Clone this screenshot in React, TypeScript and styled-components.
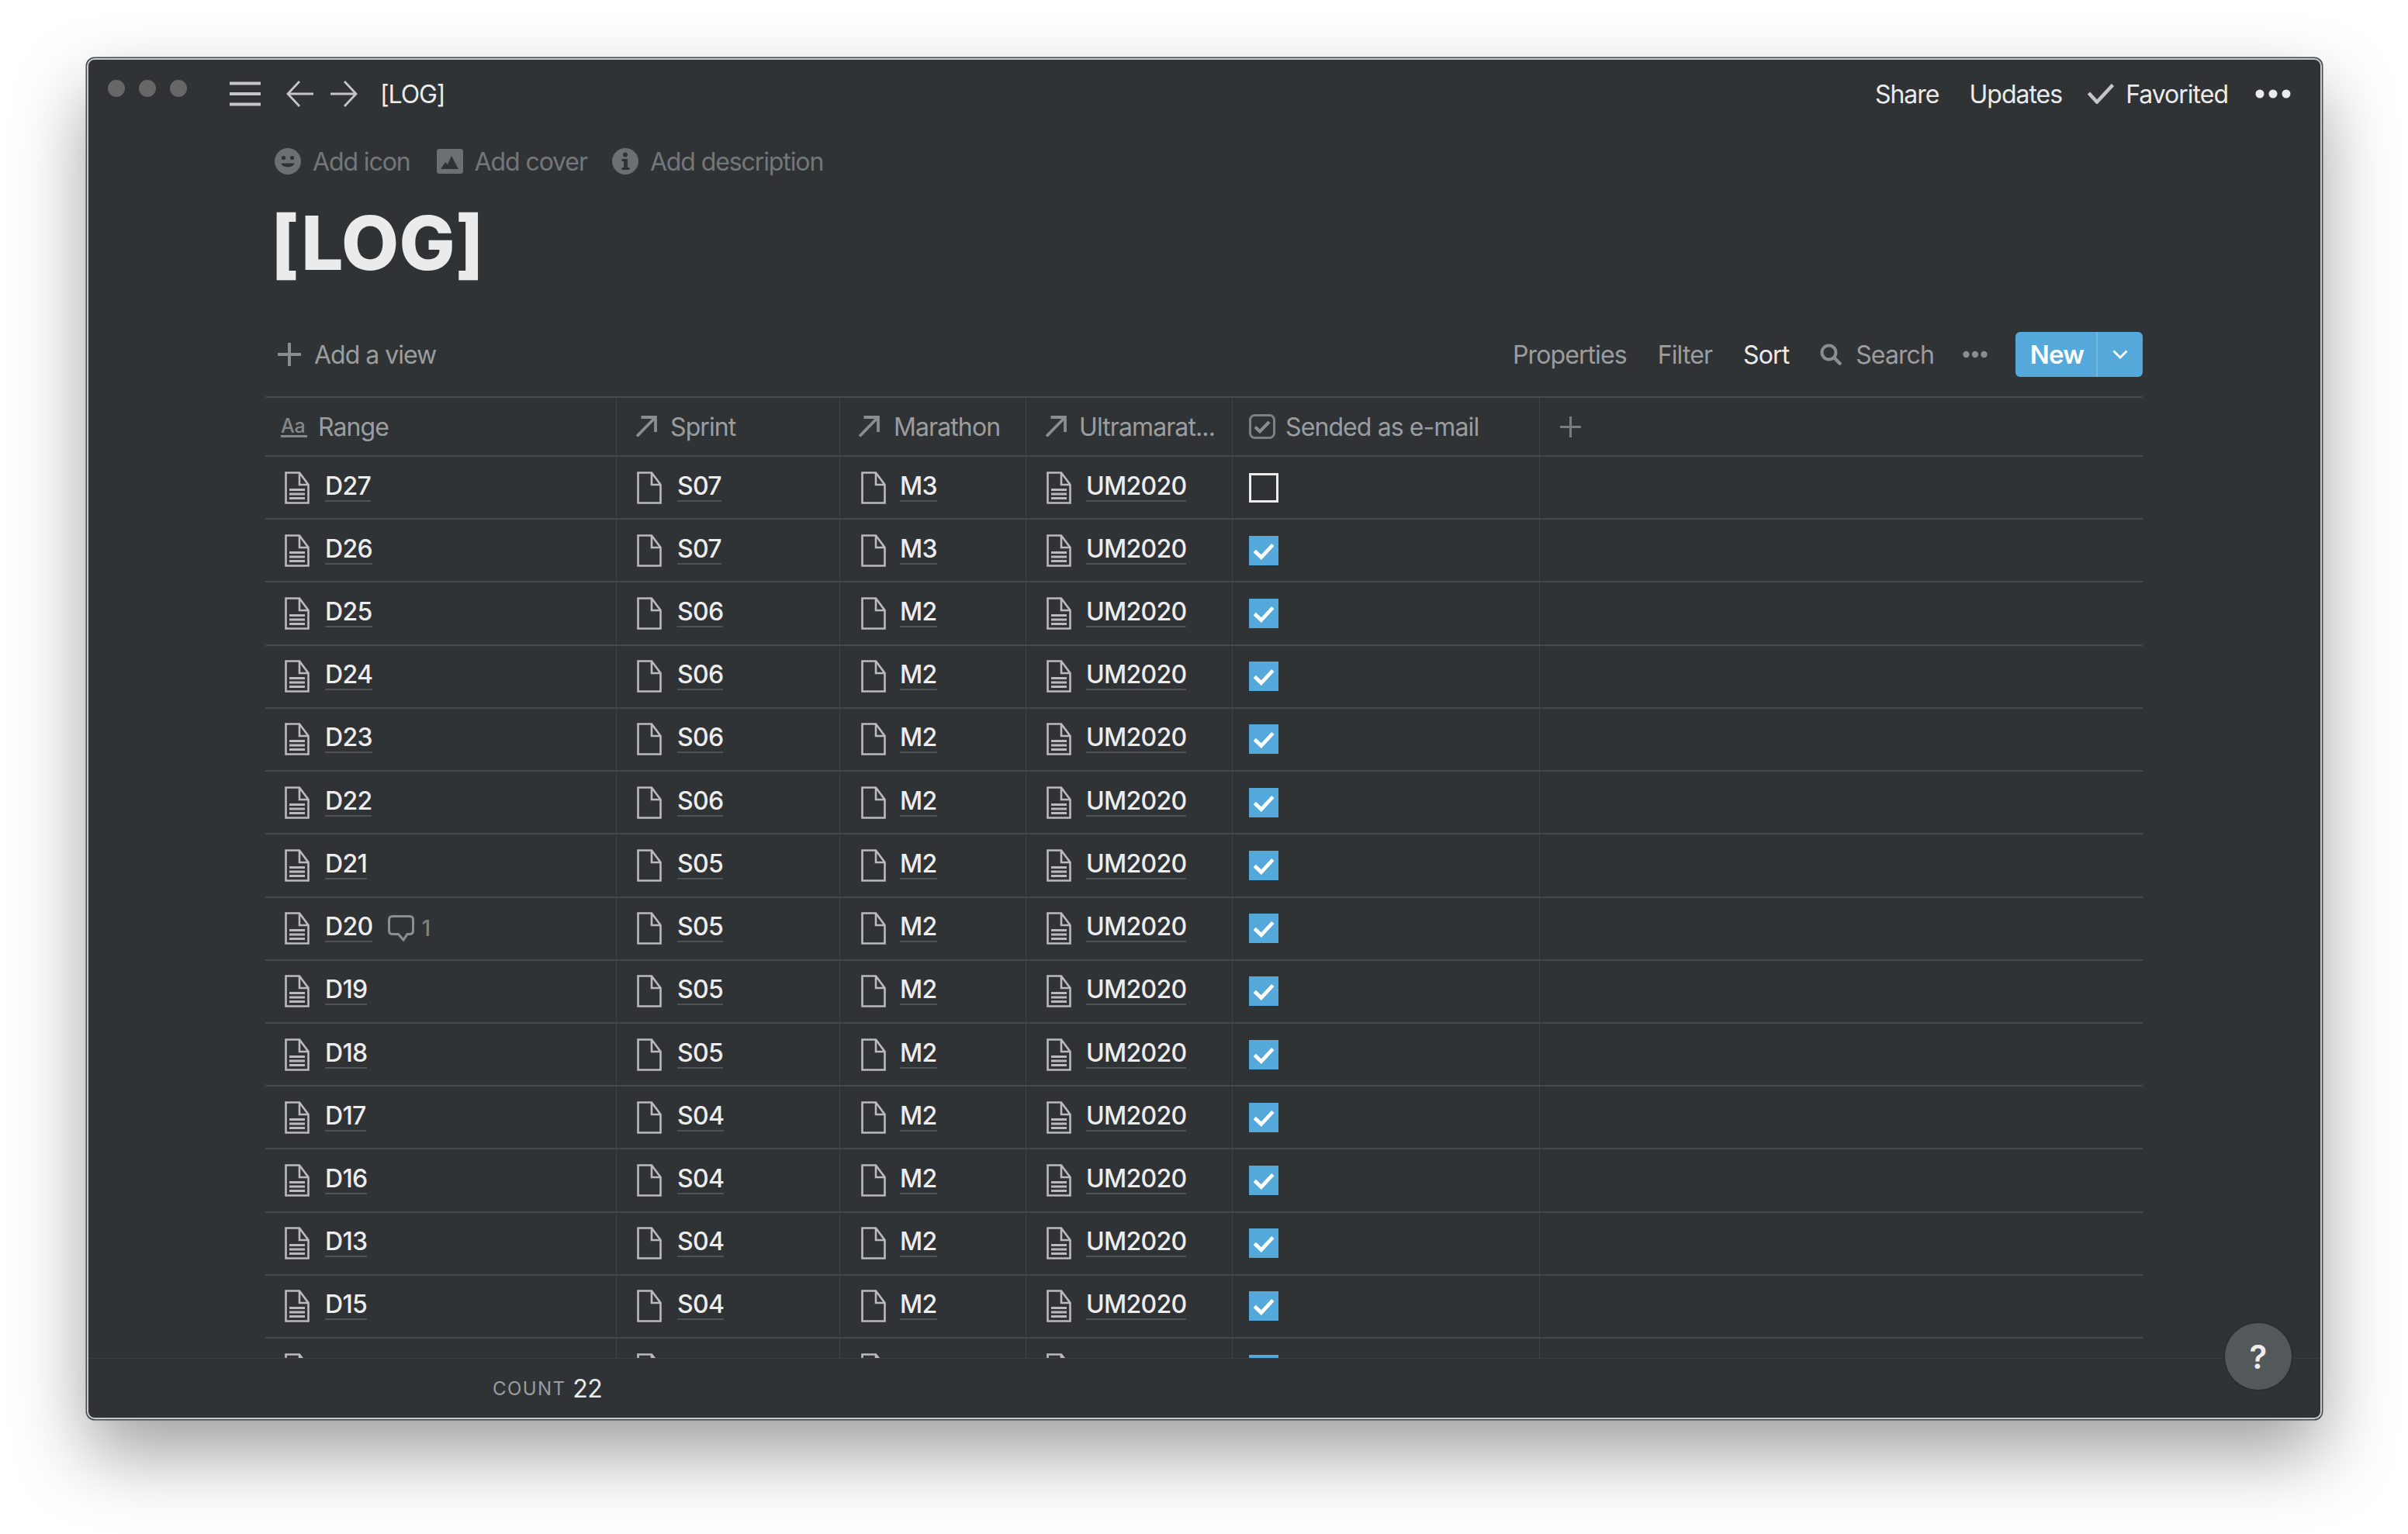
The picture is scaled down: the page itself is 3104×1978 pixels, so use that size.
import React from "react";
import styled, { createGlobalStyle } from "styled-components";

const Global = createGlobalStyle`
  html, body { margin: 0; padding: 0; background: #fff; }
  body { font-family: Inter, "Liberation Sans", sans-serif; width: 3104px; height: 1978px; overflow: hidden; }
  * { box-sizing: border-box; }
`;

const Page = styled.div`
  width: 3104px;
  height: 1978px;
  padding: 75px 0 0 112px;
  background: #fff;
`;

const Window = styled.div`
  position: relative;
  width: 2881px;
  height: 1755px;
  display: flex;
  flex-direction: column;
  background: #303336;
  border: 2px solid #c9caca;
  border-radius: 10px;
  box-shadow: 0 0 0 1.5px #46494b, 0 44px 96px 0 rgba(0, 0, 0, 0.38);
`;

const Topbar = styled.header`
  height: 88px;
  flex: none;
  display: flex;
  align-items: center;
  padding: 0 38px 0 25px;
`;

const Lights = styled.div`
  display: flex;
  gap: 18px;
  margin-bottom: 14px;
  margin-right: 55px;
`;

const Light = styled.span`
  width: 22px;
  height: 22px;
  border-radius: 50%;
  background: #666767;
`;

const NavIcon = styled.svg`
  flex: none;
  display: block;
  color: #c4c5c6;
`;

const NavGroup = styled.div`
  display: flex;
  align-items: center;
  gap: 20px;
`;

const Crumb = styled.span`
  margin-left: 29px;
  font-size: 32px;
  letter-spacing: -1.1px;
  color: #ebebeb;
`;

const TopActions = styled.div`
  margin-left: auto;
  display: flex;
  align-items: center;
`;

const TopLink = styled.span<{ $ml?: number }>`
  margin-left: ${(p) => p.$ml ?? 0}px;
  font-size: 32px;
  letter-spacing: -1px;
  color: #ebebeb;
`;

const Dots = styled.svg<{ $ml: number }>`
  margin-left: ${(p) => p.$ml}px;
  display: block;
  flex: none;
`;

const Content = styled.div`
  flex: 1;
  min-height: 0;
  display: flex;
  flex-direction: column;
  padding: 0 229px 0 228px;
`;

const MetaRow = styled.div`
  height: 62px;
  margin-top: 12px;
  flex: none;
  display: flex;
  align-items: center;
  padding-left: 12px;
`;

const MetaItem = styled.div<{ $ml?: number }>`
  display: flex;
  align-items: center;
  gap: 15px;
  margin-left: ${(p) => p.$ml ?? 0}px;
  font-size: 32px;
  letter-spacing: -1.1px;
  color: #737779;
`;

const Title = styled.h1`
  margin: 30px 0 0;
  height: 88px;
  flex: none;
  padding-left: 7px;
  font-size: 96px;
  line-height: 88px;
  font-weight: 800;
  letter-spacing: 0.2px;
  color: #ebebeb;
`;

const Toolbar = styled.div`
  margin-top: 71px;
  height: 58px;
  flex: none;
  display: flex;
  align-items: center;
  padding-left: 16px;
`;

const AddView = styled.div`
  display: flex;
  align-items: center;
  gap: 17px;
  font-size: 32px;
  letter-spacing: -1px;
  color: #9b9d9f;
`;

const Tools = styled.div`
  margin-left: auto;
  display: flex;
  align-items: center;
`;

const Tool = styled.span<{ $active?: boolean; $ml?: number }>`
  margin-left: ${(p) => p.$ml ?? 0}px;
  font-size: 32px;
  letter-spacing: -0.9px;
  color: ${(p) => (p.$active ? "#ebebeb" : "#9b9d9f")};
`;

const NewButton = styled.div`
  margin-left: 36px;
  width: 164px;
  height: 58px;
  display: flex;
  align-items: stretch;
  background: #55a9da;
  border-radius: 6px;
`;

const NewLabel = styled.span`
  width: 106px;
  padding-left: 3px;
  display: flex;
  align-items: center;
  justify-content: center;
  border-right: 2px solid #74b8e0;
  font-size: 33px;
  font-weight: 600;
  letter-spacing: -0.8px;
  color: #fff;
`;

const NewCaret = styled.span`
  flex: 1;
  display: flex;
  align-items: center;
  justify-content: center;
`;

const Table = styled.div`
  margin-top: 25px;
  flex: 1;
  min-height: 0;
  overflow: hidden;
  border-top: 2px solid #45494c;
`;

const Row = styled.div<{ $head?: boolean }>`
  height: ${(p) => (p.$head ? "76px" : "81.23px")};
  display: grid;
  grid-template-columns: 453px 288px 240px 266px 396px 1fr;
  border-bottom: 2.5px solid #45494c;
`;

const Cell = styled.div<{ $pl: number; $gap: number }>`
  min-width: 0;
  display: flex;
  align-items: center;
  gap: ${(p) => p.$gap}px;
  padding-left: ${(p) => p.$pl}px;
  border-right: 1.5px solid #3e4346;
  &:last-child { border-right: none; }
`;

const HeadLabel = styled.span`
  font-size: 32px;
  letter-spacing: -0.9px;
  color: #9b9d9f;
  white-space: nowrap;
`;

const AaMark = styled.span`
  display: block;
  width: 34px;
  font-size: 25px;
  line-height: 23px;
  font-weight: 500;
  letter-spacing: -0.3px;
  white-space: nowrap;
  color: #85888a;
  border-bottom: 3px solid #85888a;
  margin-top: 2px;
`;

const PageLink = styled.span`
  margin-top: -2px;
  font-size: 32px;
  line-height: 36px;
  font-weight: 500;
  letter-spacing: -0.7px;
  color: #ededed;
  border-bottom: 2px solid #4f5356;
`;

const Comments = styled.span`
  display: flex;
  align-items: center;
  gap: 9px;
  margin-left: 0;
  font-size: 28px;
  font-weight: 500;
  color: #7f8284;
`;

const CheckBox = styled.span<{ $on: boolean }>`
  width: 38px;
  height: 38px;
  display: flex;
  align-items: center;
  justify-content: center;
  background: ${(p) => (p.$on ? "#55a9da" : "transparent")};
  border: ${(p) => (p.$on ? "none" : "3.5px solid #ededed")};
`;

const Footer = styled.div`
  height: 77px;
  flex: none;
  display: flex;
  align-items: center;
  border-top: 1px solid #383d40;
  padding: 0 0 0 521px;
`;

const CountLabel = styled.span`
  font-size: 24px;
  letter-spacing: 1.4px;
  color: #9b9d9f;
`;

const CountValue = styled.span`
  margin-left: 9px;
  font-size: 32px;
  letter-spacing: -0.5px;
  color: #ebebeb;
`;

const Help = styled.div`
  position: absolute;
  right: 37px;
  bottom: 36px;
  width: 86px;
  height: 86px;
  border-radius: 50%;
  display: flex;
  align-items: center;
  justify-content: center;
  background: #53585b;
  box-shadow: 0 0 0 2px #2a2e31;
  font-size: 42px;
  font-weight: 600;
  color: #ededed;
`;

const DocIcon = ({ lines }: { lines?: boolean }) => (
  <svg width="32" height="42" viewBox="0 0 32 42" fill="none" style={{ flex: "none", display: "block" }}>
    <path d="M1.5 1.5H19L30.5 17V40.5H1.5Z M19 1.5V17H30.5" stroke="#b9bbbc" strokeWidth="2.6" />
    {lines && <path d="M6 23.5H26M6 29H26M6 34.5H26" stroke="#b9bbbc" strokeWidth="2.8" />}
  </svg>
);

const RelArrow = () => (
  <svg width="28" height="28" viewBox="0 0 28 28" fill="none" style={{ flex: "none", display: "block" }}>
    <path d="M2 26.5L25 3M7.5 2H26V21" stroke="#8b8e90" strokeWidth="3.8" />
  </svg>
);

const Check = ({ size, color, width }: { size: number; color: string; width: number }) => (
  <svg width={size} height={size} viewBox="0 0 28 28" fill="none" style={{ display: "block" }}>
    <path d="M3 14.5L11 22L25 7" stroke={color} strokeWidth={width} />
  </svg>
);

const rows: [string, string, string, boolean, boolean?][] = [
  ["D27", "S07", "M3", false],
  ["D26", "S07", "M3", true],
  ["D25", "S06", "M2", true],
  ["D24", "S06", "M2", true],
  ["D23", "S06", "M2", true],
  ["D22", "S06", "M2", true],
  ["D21", "S05", "M2", true],
  ["D20", "S05", "M2", true, true],
  ["D19", "S05", "M2", true],
  ["D18", "S05", "M2", true],
  ["D17", "S04", "M2", true],
  ["D16", "S04", "M2", true],
  ["D13", "S04", "M2", true],
  ["D15", "S04", "M2", true],
  ["D14", "S04", "M2", true],
];

export default function App() {
  return (
    <Page>
      <Global />
      <Window>
        <Topbar>
          <Lights>
            <Light />
            <Light />
            <Light />
          </Lights>
          <NavGroup>
            <NavIcon width="40" height="32" viewBox="0 0 40 32" fill="none">
              <path d="M0 2.5H40M0 16H40M0 29.5H40" stroke="currentColor" strokeWidth="4" />
            </NavIcon>
            <NavIcon width="36" height="34" viewBox="0 0 36 34" fill="none" style={{ marginLeft: 13 }}>
              <path d="M35 17H3M17 1L2 17L17 33" stroke="currentColor" strokeWidth="2.8" />
            </NavIcon>
            <NavIcon width="36" height="34" viewBox="0 0 36 34" fill="none">
              <path d="M1 17H33M19 1L34 17L19 33" stroke="currentColor" strokeWidth="2.8" />
            </NavIcon>
          </NavGroup>
          <Crumb>[LOG]</Crumb>
          <TopActions>
            <TopLink>Share</TopLink>
            <TopLink $ml={39}>Updates</TopLink>
            <NavIcon width="34" height="26" viewBox="0 0 34 26" fill="none" style={{ marginLeft: 33 }}>
              <path d="M1.5 12L12 23.5L32.5 1.5" stroke="currentColor" strokeWidth="4.6" />
            </NavIcon>
            <TopLink $ml={15}>Favorited</TopLink>
            <Dots $ml={35} width="46" height="12" viewBox="0 0 46 12">
              <circle cx="6" cy="6" r="5.5" fill="#ececec" />
              <circle cx="23" cy="6" r="5.5" fill="#ececec" />
              <circle cx="40" cy="6" r="5.5" fill="#ececec" />
            </Dots>
          </TopActions>
        </Topbar>

        <Content>
          <MetaRow>
            <MetaItem>
              <svg width="34" height="34" viewBox="0 0 34 34" style={{ display: "block" }}>
                <circle cx="17" cy="17" r="17" fill="#6c7074" />
                <circle cx="11.5" cy="12.5" r="2.6" fill="#303336" />
                <circle cx="22.5" cy="12.5" r="2.6" fill="#303336" />
                <path d="M8.5 19.5C10 26 24 26 25.5 19.5Z" fill="#303336" />
              </svg>
              Add icon
            </MetaItem>
            <MetaItem $ml={34}>
              <svg width="34" height="32" viewBox="0 0 34 32" style={{ display: "block" }}>
                <rect width="34" height="32" rx="3" fill="#6c7074" />
                <path d="M5 26L11 17L14 20L19 9L28 26Z" fill="#303336" />
              </svg>
              Add cover
            </MetaItem>
            <MetaItem $ml={32}>
              <svg width="34" height="34" viewBox="0 0 34 34" style={{ display: "block" }}>
                <circle cx="17" cy="17" r="17" fill="#6c7074" />
                <circle cx="17" cy="8.5" r="3" fill="#303336" />
                <path d="M12.5 14H20V25H22.5V28H12.5V25H15V17H12.5Z" fill="#303336" />
              </svg>
              Add description
            </MetaItem>
          </MetaRow>

          <Title>[LOG]</Title>

          <Toolbar>
            <AddView>
              <svg width="30" height="30" viewBox="0 0 30 30" style={{ display: "block" }}>
                <path d="M15 0V30M0 15H30" stroke="#8a8d8f" strokeWidth="4" />
              </svg>
              Add a view
            </AddView>
            <Tools>
              <Tool>Properties</Tool>
              <Tool $ml={40}>Filter</Tool>
              <Tool $ml={40} $active>
                Sort
              </Tool>
              <svg width="28" height="28" viewBox="0 0 28 28" fill="none" style={{ marginLeft: 40, display: "block" }}>
                <circle cx="11.5" cy="11.5" r="9" stroke="#8b8e90" strokeWidth="4" />
                <path d="M18 18L27 27" stroke="#8b8e90" strokeWidth="4.4" />
              </svg>
              <Tool $ml={18}>Search</Tool>
              <Dots $ml={37} width="32" height="10" viewBox="0 0 32 10">
                <circle cx="4.5" cy="5" r="4.2" fill="#8b8e90" />
                <circle cx="16" cy="5" r="4.2" fill="#8b8e90" />
                <circle cx="27.5" cy="5" r="4.2" fill="#8b8e90" />
              </Dots>
              <NewButton>
                <NewLabel>New</NewLabel>
                <NewCaret>
                  <svg width="20" height="12" viewBox="0 0 20 12" fill="none" style={{ display: "block" }}>
                    <path d="M1.5 1.5L10 10L18.5 1.5" stroke="#fff" strokeWidth="2.8" />
                  </svg>
                </NewCaret>
              </NewButton>
            </Tools>
          </Toolbar>

          <Table>
            <Row $head>
              <Cell $pl={20} $gap={14}>
                <AaMark>Aa</AaMark>
                <HeadLabel>Range</HeadLabel>
              </Cell>
              <Cell $pl={24} $gap={17}>
                <RelArrow />
                <HeadLabel>Sprint</HeadLabel>
              </Cell>
              <Cell $pl={23} $gap={18}>
                <RelArrow />
                <HeadLabel>Marathon</HeadLabel>
              </Cell>
              <Cell $pl={24} $gap={16}>
                <RelArrow />
                <HeadLabel>Ultramarat...</HeadLabel>
              </Cell>
              <Cell $pl={21} $gap={13}>
                <svg width="34" height="32" viewBox="0 0 34 32" fill="none" style={{ display: "block", flex: "none" }}>
                  <rect x="1.5" y="1.5" width="31" height="29" rx="6" stroke="#7d8183" strokeWidth="3" />
                  <path d="M8 16.5L14 22.5L26 10" stroke="#8b8e90" strokeWidth="4" />
                </svg>
                <HeadLabel>Sended as e-mail</HeadLabel>
              </Cell>
              <Cell $pl={26} $gap={0}>
                <svg width="27" height="27" viewBox="0 0 27 27" style={{ display: "block" }}>
                  <path d="M13.5 0V27M0 13.5H27" stroke="#797d80" strokeWidth="3" />
                </svg>
              </Cell>
            </Row>
            {rows.map(([name, sprint, marathon, on, comment], i) => (
              <Row key={i}>
                <Cell $pl={25} $gap={20}>
                  <DocIcon lines />
                  <PageLink>{name}</PageLink>
                  {comment && (
                    <Comments>
                      <svg width="34" height="34" viewBox="0 0 34 34" fill="none" style={{ display: "block" }}>
                        <path
                          d="M6 1.5H28C31 1.5 32.5 3 32.5 6V20C32.5 23 31 24.5 28 24.5H25L20 32L13.5 24.5H6C3 24.5 1.5 23 1.5 20V6C1.5 3 3 1.5 6 1.5Z"
                          stroke="#8b8e90"
                          strokeWidth="3"
                        />
                      </svg>
                      1
                    </Comments>
                  )}
                </Cell>
                <Cell $pl={26} $gap={20}>
                  <DocIcon />
                  <PageLink>{sprint}</PageLink>
                </Cell>
                <Cell $pl={27} $gap={18}>
                  <DocIcon />
                  <PageLink>{marathon}</PageLink>
                </Cell>
                <Cell $pl={26} $gap={19}>
                  <DocIcon lines />
                  <PageLink>UM2020</PageLink>
                </Cell>
                <Cell $pl={21} $gap={0}>
                  <CheckBox $on={on}>{on && <Check size={30} color="#fff" width={4.4} />}</CheckBox>
                </Cell>
                <Cell $pl={0} $gap={0} />
              </Row>
            ))}
          </Table>
        </Content>

        <Footer>
          <CountLabel>COUNT</CountLabel>
          <CountValue>22</CountValue>
        </Footer>
        <Help>?</Help>
      </Window>
    </Page>
  );
}
